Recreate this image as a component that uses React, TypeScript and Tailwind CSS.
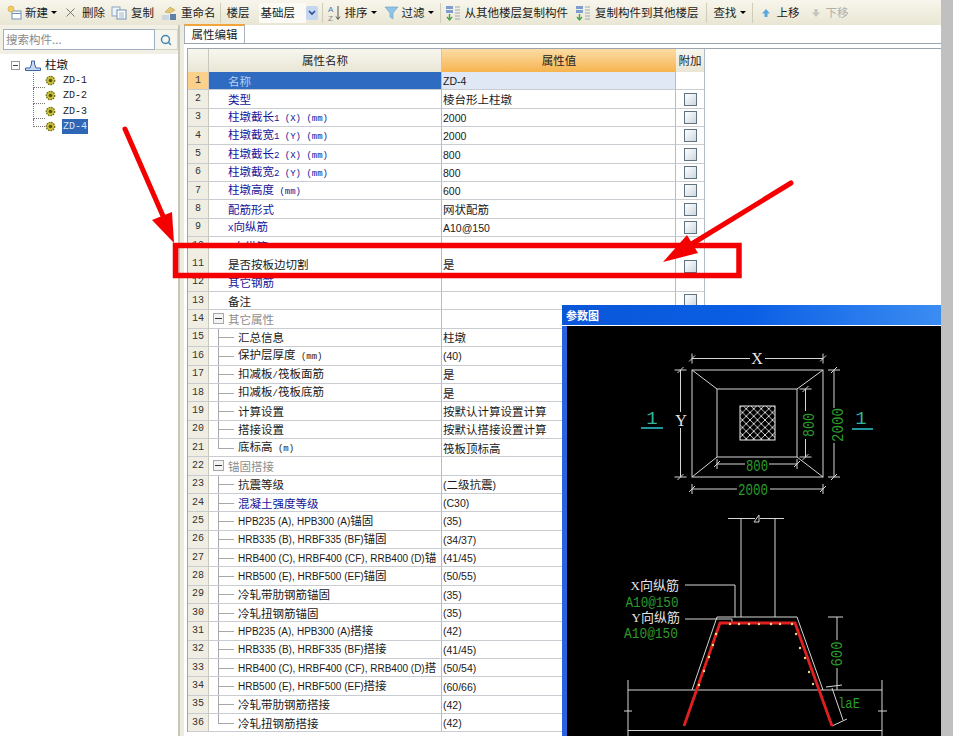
import { X, Search } from 'lucide-react';

type RowKind = 'blue' | 'black' | 'group';
type Row = { name: string; value?: string; kind: RowKind; child?: boolean; last?: boolean; check?: boolean };

const rows: Row[] = [
  { name: '名称', value: 'ZD-4', kind: 'blue' },
  { name: '类型', value: '棱台形上柱墩', kind: 'blue', check: true },
  { name: '柱墩截长1 (X) (mm)', value: '2000', kind: 'blue', check: true },
  { name: '柱墩截宽1 (Y) (mm)', value: '2000', kind: 'blue', check: true },
  { name: '柱墩截长2 (X) (mm)', value: '800', kind: 'blue', check: true },
  { name: '柱墩截宽2 (Y) (mm)', value: '800', kind: 'blue', check: true },
  { name: '柱墩高度 (mm)', value: '600', kind: 'blue', check: true },
  { name: '配筋形式', value: '网状配筋', kind: 'blue', check: true },
  { name: 'X向纵筋', value: 'A10@150', kind: 'blue', check: true },
  { name: 'Y向纵筋', value: 'A10@150', kind: 'blue' },
  { name: '是否按板边切割', value: '是', kind: 'black', check: true },
  { name: '其它钢筋', kind: 'blue' },
  { name: '备注', kind: 'black', check: true },
  { name: '其它属性', kind: 'group' },
  { name: '汇总信息', value: '柱墩', kind: 'black', child: true },
  { name: '保护层厚度 (mm)', value: '(40)', kind: 'black', child: true },
  { name: '扣减板/筏板面筋', value: '是', kind: 'black', child: true },
  { name: '扣减板/筏板底筋', value: '是', kind: 'black', child: true },
  { name: '计算设置', value: '按默认计算设置计算', kind: 'black', child: true },
  { name: '搭接设置', value: '按默认搭接设置计算', kind: 'black', child: true },
  { name: '底标高 (m)', value: '筏板顶标高', kind: 'black', child: true, last: true },
  { name: '锚固搭接', kind: 'group' },
  { name: '抗震等级', value: '(二级抗震)', kind: 'black', child: true },
  { name: '混凝土强度等级', value: '(C30)', kind: 'blue', child: true },
  { name: 'HPB235 (A), HPB300 (A)锚固', value: '(35)', kind: 'black', child: true },
  { name: 'HRB335 (B), HRBF335 (BF)锚固', value: '(34/37)', kind: 'black', child: true },
  { name: 'HRB400 (C), HRBF400 (CF), RRB400 (D)锚', value: '(41/45)', kind: 'black', child: true },
  { name: 'HRB500 (E), HRBF500 (EF)锚固', value: '(50/55)', kind: 'black', child: true },
  { name: '冷轧带肋钢筋锚固', value: '(35)', kind: 'black', child: true },
  { name: '冷轧扭钢筋锚固', value: '(35)', kind: 'black', child: true },
  { name: 'HPB235 (A), HPB300 (A)搭接', value: '(42)', kind: 'black', child: true },
  { name: 'HRB335 (B), HRBF335 (BF)搭接', value: '(41/45)', kind: 'black', child: true },
  { name: 'HRB400 (C), HRBF400 (CF), RRB400 (D)搭', value: '(50/54)', kind: 'black', child: true },
  { name: 'HRB500 (E), HRBF500 (EF)搭接', value: '(60/66)', kind: 'black', child: true },
  { name: '冷轧带肋钢筋搭接', value: '(42)', kind: 'black', child: true },
  { name: '冷轧扭钢筋搭接', value: '(42)', kind: 'black', child: true, last: true },
];

const cjk = "font-['Noto_Sans_CJK_SC',sans-serif]";

// ascii runs are much narrower than the cjk glyphs in the original font
const Mixed = ({ text, latin }: { text: string; latin: string }) => (
  <>
    {text.split(/([\x20-\x7e]+)/).map((part, i) =>
      /^[\x20-\x7e]+$/.test(part) ? (
        <span key={i} className={latin}>
          {part}
        </span>
      ) : (
        <span key={i}>{part}</span>
      )
    )}
  </>
);

const Caret = () => <span className="ml-[3px] w-0 h-0 border-x-[3px] border-x-transparent border-t-[3px] border-t-black" />;
const Sep = ({ className }: { className: string }) => <span className={`w-px h-[20px] bg-[#cfccb8] ${className}`} />;

const NewIcon = () => (
  <svg width="15" height="15" viewBox="0 0 15 15">
    <rect x="5" y="6" width="9" height="8" fill="#fff" stroke="#6f8fb5" />
    <path d="M5 8.500h9" stroke="#6f8fb5" />
    <circle cx="4" cy="4" r="3" fill="#f2cf63" stroke="#c9a53c" strokeWidth="0.6" />
  </svg>
);
const CopyIcon = () => (
  <svg width="16" height="14" viewBox="0 0 16 14">
    <rect x="1" y="1" width="8" height="9" fill="#eef3f8" stroke="#8ea6bd" />
    <rect x="6" y="4" width="9" height="9" fill="#fff" stroke="#6f8fb5" />
    <path d="M8 7h5M8 9h5M8 11h5" stroke="#9bb2c8" />
  </svg>
);
const RenameIcon = () => (
  <svg width="15" height="16" viewBox="0 0 15 16">
    <path d="M3 7L8 2l5 3-5 3z" fill="#e3c873" stroke="#b89b4a" strokeWidth="0.6" />
    <rect x="8" y="9" width="6" height="6" fill="#5d7fa8" />
    <rect x="0" y="10" width="7" height="5" fill="#cdd6df" />
  </svg>
);
const SortIcon = () => (
  <svg width="14" height="18" viewBox="0 0 14 18">
    <text x="0" y="8" fontSize="8" fill="#4a78b5" fontFamily="Liberation Sans">A</text>
    <text x="0" y="17" fontSize="8" fill="#888" fontFamily="Liberation Sans">Z</text>
    <path d="M10 2v13M8 12.500l2 3 2-3" stroke="#555" fill="none" />
  </svg>
);
const FilterIcon = () => (
  <svg width="15" height="14" viewBox="0 0 15 14">
    <path d="M1 1h13L9 7v6L6 11V7z" fill="#8ec4e6" stroke="#6b9fc2" strokeWidth="0.6" />
  </svg>
);
const FloorCopyIcon = () => (
  <svg width="15" height="18" viewBox="0 0 15 18">
    <rect x="0" y="2" width="7" height="3" fill="#7d9fd0" />
    <rect x="0" y="6" width="7" height="3" fill="#7d9fd0" />
    <path d="M3.500 10v5M1 13l2.500 3 2.500-3" stroke="#4aa04a" fill="none" strokeWidth="1.4" />
    <path d="M9 3h5M9 6h5M9 9h5M9 12h5M9 15h5" stroke="#9aa7b5" />
  </svg>
);
const UpDown = ({ color, down }: { color: string; down?: boolean }) => (
  <svg width="10" height="10" viewBox="0 0 10 10" className={down ? 'rotate-180' : ''}>
    <path d="M5 1L9 5.500H6.500V9h-3V5.500H1z" fill={color} />
  </svg>
);

const Toolbar = () => (
  <div className={`flex items-center h-[25px] shrink-0 bg-gradient-to-b from-[#f8f6ec] to-[#e9e6d4] text-[11.500px] text-[#1c1c1c] whitespace-nowrap ${cjk}`}>
    <span className="ml-[7px]"><NewIcon /></span>
    <span className="ml-[3px]">新建</span>
    <Caret />
    <X size={15} strokeWidth={1.4} className="ml-[6px] text-[#666]" />
    <span className="ml-[4px]">删除</span>
    <span className="ml-[6px]"><CopyIcon /></span>
    <span className="ml-[4px]">复制</span>
    <span className="ml-[8px]"><RenameIcon /></span>
    <span className="ml-[4px]">重命名</span>
    <Sep className="ml-[4px]" />
    <span className="ml-[6px]">楼层</span>
    <span className="ml-[9px] w-[47px] h-[20px] bg-[#fbfaf4] pl-[2px] leading-[18px]">基础层</span>
    <span className="flex items-center justify-center w-[12px] h-[14px] bg-[#c5d6f0] rounded-[2px]">
      <svg width="8" height="6" viewBox="0 0 8 6"><path d="M1 1l3 3 3-3" stroke="#2b4f93" strokeWidth="1.6" fill="none" /></svg>
    </span>
    <Sep className="ml-[4px]" />
    <span className="ml-[5px]"><SortIcon /></span>
    <span className="ml-[3px]">排序</span>
    <Caret />
    <span className="ml-[7px]"><FilterIcon /></span>
    <span className="ml-[3px]">过滤</span>
    <Caret />
    <Sep className="ml-[6px]" />
    <span className="ml-[5px]"><FloorCopyIcon /></span>
    <span className="ml-[4px]">从其他楼层复制构件</span>
    <span className="ml-[8px]"><FloorCopyIcon /></span>
    <span className="ml-[4px]">复制构件到其他楼层</span>
    <Sep className="ml-[7px]" />
    <span className="ml-[7px]">查找</span>
    <Caret />
    <Sep className="ml-[6px]" />
    <span className="ml-[8px]"><UpDown color="#5aa7de" /></span>
    <span className="ml-[6px]">上移</span>
    <span className="ml-[11px]"><UpDown color="#c4c4bc" down /></span>
    <span className="ml-[5px] text-[#b0b0a8]">下移</span>
  </div>
);

const Gear = () => (
  <svg width="11" height="11" viewBox="0 0 11 11">
    <circle cx="5.500" cy="5.500" r="4.200" fill="#c9bf3a" stroke="#6e6a12" strokeWidth="1.300" strokeDasharray="1.500 1" />
    <circle cx="5.500" cy="5.500" r="1.800" fill="#55520c" />
  </svg>
);

const TreeItem = ({ label, selected, last }: { label: string; selected?: boolean; last?: boolean }) => (
  <div className="relative flex items-center h-[15.300px] pl-[45px]">
    <span className={`absolute left-[33px] top-0 w-[12px] border-l border-b border-dotted border-[#777] ${last ? 'h-1/2' : 'h-full'}`} />
    <Gear />
    <span className={`ml-[6px] px-px font-['Liberation_Mono',monospace] text-[10px] leading-[15px] ${selected ? 'bg-[#2f66b5] text-[#d5e3f5]' : 'text-[#222]'}`}>{label}</span>
  </div>
);

const Sidebar = () => (
  <aside className="w-[180px] shrink-0 flex flex-col bg-white border-r-[2px] border-r-[#c9c7b8]">
    <div className="flex items-center h-[29px] bg-[#f2f0e4] pl-[3px]">
      <div className={`w-[152px] h-[21px] border border-[#9fb0c2] bg-white text-[11.500px] text-[#8a8a8a] pl-[2px] leading-[18px] ${cjk}`}>搜索构件...</div>
      <div className="flex items-center justify-center w-[23px] h-[21px] bg-[#f7f6ee] border-y border-r border-[#d6d4c6]">
        <Search size={12} strokeWidth={3} className="text-[#3f87b8]" />
      </div>
    </div>
    <div className={`pt-[3px] text-[11.500px] ${cjk}`}>
      <div className="flex items-center h-[16px] pl-[11px]">
        <span className="flex items-center justify-center w-[9px] h-[9px] border border-[#999] bg-white">
          <span className="w-[5px] h-px bg-[#444]" />
        </span>
        <svg width="16" height="11" viewBox="0 0 16 11" className="ml-[5px]">
          <path d="M0.500 10.500h15V8H11L9.500 4V1h-3v3L5 8H0.500z" fill="#c9d8ee" stroke="#3465a4" />
        </svg>
        <span className="ml-[4px] text-[#111]">柱墩</span>
      </div>
      <TreeItem label="ZD-1" />
      <TreeItem label="ZD-2" />
      <TreeItem label="ZD-3" />
      <TreeItem label="ZD-4" selected last />
    </div>
  </aside>
);

const Checkbox = () => <span className="block w-[13px] h-[13px] border border-[#5f7280] bg-gradient-to-br from-white to-[#cfd8df]" />;

const Connector = ({ last }: { last?: boolean }) => (
  <>
    <span className={`absolute left-[9px] top-0 w-px bg-[#a8a8a8] ${last ? 'h-1/2' : 'h-full'}`} />
    <span className="absolute left-[9px] top-1/2 w-[16px] h-px bg-[#a8a8a8]" />
  </>
);

const TableRow = ({ row, index }: { row: Row; index: number }) => {
  const selected = index === 0;
  const isGroup = row.kind === 'group';
  const height = index === 9 ? 'h-[11px]' : index === 10 ? 'h-[25.700px]' : 'h-[18.350px]';
  const align = index === 9 ? 'items-start' : index === 10 ? 'items-end' : 'items-center';
  const nameColor = selected ? 'text-[#b9d0ee]' : isGroup ? 'text-[#8d8d8d]' : row.kind === 'blue' ? 'text-[#14149a]' : 'text-[#1a1a1a]';
  const cell = 'border-b border-b-[#c9cdd2]';
  const nameLatin = /^H[PR]B/.test(row.name)
    ? "font-['Liberation_Sans',sans-serif] text-[10px]"
    : "font-['Liberation_Mono',monospace] text-[9px]";
  const valueLatin = "font-['Liberation_Sans',sans-serif] text-[10.500px]";

  return (
    <div className={`flex overflow-hidden ${height}`}>
      <div className={`w-[21px] shrink-0 flex justify-center ${align} border-r border-r-[#c7c7bd] font-['Liberation_Mono',monospace] text-[10px] ${cell} ${selected ? 'bg-[#fbd08a] text-[#333]' : 'bg-[#f0eee2] text-[#333]'}`}>
        <span className="leading-[18px]">{index + 1}</span>
      </div>
      <div className={`relative w-[233px] shrink-0 flex ${align} border-r border-r-[#b4bcc4] ${cell} ${selected ? 'bg-[#2f6bc0]' : 'bg-white'} ${nameColor} ${row.child ? 'pl-[29px]' : 'pl-[19px]'} whitespace-nowrap overflow-hidden`}>
        {row.child && <Connector last={row.last} />}
        {isGroup && (
          <span className="absolute left-[4px] top-[3px] flex items-center justify-center w-[11px] h-[11px] border border-[#a8a8a8] bg-[#f4f4f4]">
            <span className="w-[7px] h-px bg-[#333]" />
          </span>
        )}
        <span className="leading-[18px]"><Mixed text={row.name} latin={nameLatin} /></span>
      </div>
      <div className={`w-[234px] shrink-0 flex ${align} border-r border-r-[#b4bcc4] pl-[1px] text-[#1a1a1a] whitespace-nowrap ${cell} ${selected ? 'bg-[#dfe8f4]' : 'bg-white'}`}>
        <span className="leading-[18px]">{row.value && <Mixed text={row.value} latin={valueLatin} />}</span>
      </div>
      <div className={`w-[29px] shrink-0 flex justify-center ${align} border-r border-r-[#b4bcc4] bg-white ${cell}`}>
        {row.check && <Checkbox />}
      </div>
    </div>
  );
};

const PropertyTable = () => (
  <div className="flex-1 min-w-0 flex flex-col bg-white border-l-[4px] border-l-[#eeecdf]">
    <div className="flex items-end h-[19px] shrink-0 border-b border-b-[#9aa5b0] bg-white">
      <div className={`w-[61px] h-[19px] border-x border-[#a8b2bc] border-t-[2px] border-t-[#f0a63c] bg-white text-[11.500px] text-[#222] text-center leading-[16px] ${cjk}`}>属性编辑</div>
    </div>
    <div className="h-[4px] shrink-0" />
    <div className={`ml-[3px] border-t border-t-[#9aa5b0] border-l border-l-[#9aa5b0] text-[11.500px] ${cjk}`}>
      <div className="flex h-[23px]">
        <div className="w-[21px] bg-gradient-to-b from-[#f8f7ee] to-[#e9e6d6] border-r border-r-[#c7c7bd]" />
        <div className="w-[233px] flex items-center justify-center bg-gradient-to-b from-[#f8f7ee] to-[#e9e6d6] text-[#222] border-r border-r-[#c7c7bd]">属性名称</div>
        <div className="w-[234px] flex items-center justify-center bg-gradient-to-b from-[#fbdca3] to-[#f6b44c] text-[#222]">属性值</div>
        <div className="w-[29px] flex items-center justify-center bg-gradient-to-b from-[#f8f7ee] to-[#e9e6d6] text-[#222] border-r border-r-[#b4bcc4]">附加</div>
      </div>
      {rows.map((row, i) => (
        <TableRow key={i} row={row} index={i} />
      ))}
    </div>
  </div>
);

const wire = '#d6d6d6';
const green = '#2c9a2c';

const DimTick = ({ x, y }: { x: number; y: number }) => (
  <path d={`M${x - 3} ${y + 3}L${x + 3} ${y - 3}M${x} ${y - 5}V${y + 5}`} stroke={wire} strokeWidth="1" />
);
const DimTickV = ({ x, y }: { x: number; y: number }) => (
  <path d={`M${x - 3} ${y + 3}L${x + 3} ${y - 3}M${x - 6} ${y}H${x + 6}`} stroke={wire} strokeWidth="1" />
);

const rebarDots = [
  [699, 685], [704, 671], [709, 657], [713, 645], [716, 634], [730, 624], [739, 624], [749, 624], [759, 624], [771, 624], [780, 624], [792, 624],
  [796, 634], [800, 648], [805, 658], [809, 672], [813, 684],
];

const DimText = ({ x, y, len, children, rotate }: { x: number; y: number; len: number; children: string; rotate?: boolean }) => (
  <text
    x={x}
    y={y}
    fontSize="16"
    fill={green}
    textAnchor="middle"
    textLength={len}
    lengthAdjust="spacingAndGlyphs"
    transform={rotate ? `rotate(-90 ${x} ${y})` : undefined}
  >
    {children}
  </text>
);

const ParamWindow = () => (
  <div className="absolute left-[562px] top-[305px] w-[379px] h-[431px] flex flex-col overflow-hidden bg-[#2a62dc] pl-[5px]">
    <div className={`-ml-[5px] h-[21px] shrink-0 flex items-center pl-[4px] bg-gradient-to-r from-[#0a56d8] via-[#0a5fe4] to-[#3b8cf2] text-[11px] font-bold text-white border-b border-b-white ${cjk}`}>参数图</div>
    <div className="flex-1 bg-black">
      <svg width="374" height="410" viewBox="567 326 374 410" className="block" fontFamily="Liberation Mono">
        <defs>
          <pattern id="hatch" width="7.500" height="7.500" patternUnits="userSpaceOnUse">
            <path d="M0 0L7.500 7.500M7.500 0L0 7.500" stroke="#e8e8e8" strokeWidth="0.9" />
          </pattern>
        </defs>

        {/* plan view */}
        <g fill="none" stroke={wire}>
          <rect x="692" y="370" width="131" height="107" />
          <rect x="717" y="389" width="80" height="68" />
          <path d="M692 370L717 389M823 370L797 389M692 477L717 457M823 477L797 457" />
          <path d="M692 358.500H750M765 358.500H823M680.500 370V412M680.500 428V477M834 370V408M834 443V477M805.500 389V411M805.500 439V457M717 464H745M769 464H797M692 489H737M770 489H823" />
        </g>
        <rect x="740" y="406" width="35" height="34" fill="url(#hatch)" stroke="#eee" />
        <DimTick x={692} y={358.5} />
        <DimTick x={823} y={358.5} />
        <DimTick x={692} y={489} />
        <DimTick x={823} y={489} />
        <DimTickV x={680.5} y={370} />
        <DimTickV x={680.5} y={477} />
        <DimTickV x={834} y={370} />
        <DimTickV x={834} y={477} />
        <DimTickV x={805.5} y={389} />
        <DimTickV x={805.5} y={457} />
        <DimTick x={717} y={464} />
        <DimTick x={797} y={464} />

        <text x="757" y="364" fontSize="16" fill="#e6e6e6" textAnchor="middle" fontFamily="Liberation Serif">X</text>
        <text x="681" y="426" fontSize="16" fill="#e6e6e6" textAnchor="middle" fontFamily="Liberation Serif">Y</text>
        <DimText x={757} y={471} len={22}>800</DimText>
        <DimText x={753} y={495} len={30}>2000</DimText>
        <DimText x={814} y={425} len={24} rotate>800</DimText>
        <DimText x={843} y={425} len={34} rotate>2000</DimText>
        <text x="652" y="424" fontSize="19" fill="#2fb59a" textAnchor="middle">1</text>
        <path d="M641 428H663" stroke="#2fd6e0" strokeWidth="1.400" />
        <text x="861" y="424" fontSize="19" fill="#2fb59a" textAnchor="middle">1</text>
        <path d="M852 429H873" stroke="#2fd6e0" strokeWidth="1.400" />

        {/* section view */}
        <g fill="none" stroke={wire}>
          <path d="M741 518V617M775 518V617M728 518.500H755M760 518.500H784M754 522L759 515V522L754 522" />
          <path d="M692 690L717 617H797L823 690" />
          <path d="M628 690H882M628 730.500H882M628 680V736M882 680V736" />
          <path d="M685 585H735V617M685 619H732V623" />
          <path d="M837 617V640M837 668V690M828 617H843" />
          <path d="M832 688L843 720M832 726L847 719M826 687L842 685" />
          <path d="M624 711H632M878 711H887" />
        </g>
        <path d="M684 726L720 623H795L832 726" fill="none" stroke="#e02020" strokeWidth="2.800" />
        {rebarDots.map(([cx, cy], i) => (
          <circle key={i} cx={cx} cy={cy} r="1.200" fill="#f3d98a" />
        ))}
        <text x="679" y="590" fontSize="13" fill="#e6e6e6" textAnchor="end" fontFamily="Liberation Serif, Noto Sans CJK SC">X向纵筋</text>
        <text x="652" y="607" fontSize="15" fill={green} textAnchor="middle" textLength={53} lengthAdjust="spacingAndGlyphs">A10@150</text>
        <text x="680" y="622" fontSize="13" fill="#e6e6e6" textAnchor="end" fontFamily="Liberation Serif, Noto Sans CJK SC">Y向纵筋</text>
        <text x="651" y="638" fontSize="15" fill={green} textAnchor="middle" textLength={54} lengthAdjust="spacingAndGlyphs">A10@150</text>
        <DimText x={842} y={654} len={25} rotate>600</DimText>
        <text x="849" y="708" fontSize="14" fill={green} textAnchor="middle" textLength={22} lengthAdjust="spacingAndGlyphs">laE</text>
      </svg>
    </div>
  </div>
);

const Annotations = () => (
  <svg width="953" height="736" viewBox="0 0 953 736" className="absolute inset-0 pointer-events-none">
    <rect x="175.500" y="245.500" width="563.500" height="30" fill="none" stroke="#f40000" strokeWidth="5.500" />
    <path d="M125 129L163 216" stroke="#f40000" strokeWidth="5" strokeLinecap="round" />
    <path d="M152 220L172 212L174 243Z" fill="#f40000" />
    <path d="M791 183L690 245" stroke="#f40000" strokeWidth="5" strokeLinecap="round" />
    <path d="M663 262L687 235L698 253Z" fill="#f40000" />
  </svg>
);

export default function App() {
  return (
    <div className="relative flex w-[953px] h-[736px] overflow-hidden bg-white">
      <div className="w-[941px] shrink-0 flex flex-col">
        <Toolbar />
        <div className="flex flex-1 min-h-0">
          <Sidebar />
          <PropertyTable />
        </div>
      </div>
      <div className="flex-1 bg-[#c0c0c0]" />
      <ParamWindow />
      <Annotations />
    </div>
  );
}
